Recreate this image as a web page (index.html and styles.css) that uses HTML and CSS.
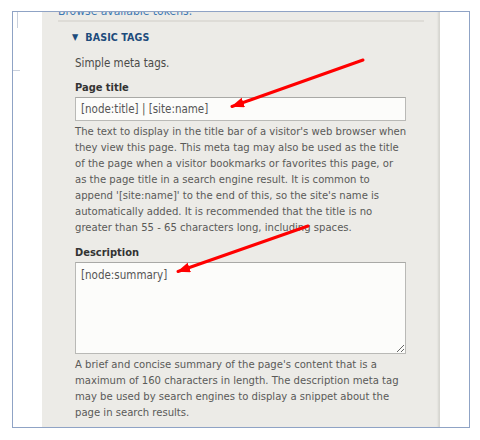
FILE: index.html
```html
<!DOCTYPE html>
<html>
<head>
<meta charset="utf-8">
<link rel="stylesheet" href="styles.css">
</head>
<body>
<div class="frame">
  <div class="mark-v"></div>
  <div class="mark-h"></div>
  <div class="panel">
    <a class="tokens" href="#">Browse available tokens.</a>
    <div class="fieldset">
      <div class="legend"><span class="tri">▼</span><span>BASIC TAGS</span></div>
      <div class="intro">Simple meta tags.</div>
      <div class="label">Page title</div>
      <input class="text" type="text" value="[node:title] | [site:name]" readonly>
      <div class="help">The text to display in the title bar of a visitor's web browser when<br>they view this page. This meta tag may also be used as the title<br>of the page when a visitor bookmarks or favorites this page, or<br>as the page title in a search engine result. It is common to<br>append '[site:name]' to the end of this, so the site's name is<br>automatically added. It is recommended that the title is no<br>greater than 55 - 65 characters long, including spaces.</div>
      <div class="label label-desc">Description</div>
      <textarea class="area" readonly>[node:summary]</textarea>
      <div class="help">A brief and concise summary of the page's content that is a<br>maximum of 160 characters in length. The description meta tag<br>may be used by search engines to display a snippet about the<br>page in search results.</div>
    </div>
  </div>
</div>
<svg class="arrows" width="480" height="440" viewBox="0 0 480 440">
  <defs>
    <marker id="head" markerUnits="userSpaceOnUse" markerWidth="14" markerHeight="12" refX="12" refY="5" orient="auto">
      <path d="M0,0 L13,5 L0,10 Z" fill="#ff0000"/>
    </marker>
  </defs>
  <line x1="363" y1="60" x2="232" y2="106.5" stroke="#ff0000" stroke-width="3" stroke-linecap="round" marker-end="url(#head)"/>
  <line x1="308" y1="226" x2="178" y2="271.5" stroke="#ff0000" stroke-width="3" stroke-linecap="round" marker-end="url(#head)"/>
</svg>
</body>
</html>
```
FILE: styles.css
```css
html, body {
  margin: 0;
  padding: 0;
  background: #ffffff;
}
body {
  position: relative;
  width: 480px;
  height: 440px;
  overflow: hidden;
  font-family: "DejaVu Sans Condensed", "DejaVu Sans", sans-serif;
}
.frame {
  position: relative;
  margin: 11px 0 0 12px;
  width: 427px;
  height: 415px;
  border: 1px solid #8fa3c5;
  overflow: hidden;
  padding-left: 29px;
  box-sizing: content-box;
  display: flex;
}
.frame > .panel { flex: none; }
.mark-v {
  position: absolute;
  left: 4px;
  top: 0;
  width: 1px;
  height: 16px;
  background: #c9d0dc;
}
.mark-h {
  position: absolute;
  left: 0;
  top: 58px;
  width: 7px;
  height: 1px;
  background: #c9d0dc;
}
.panel {
  width: 398px;
  height: 100%;
  background: #ecebe7;
  box-shadow: inset -3px 0 2px -1px #d6d5d0;
  padding: 0 16px;
  box-sizing: border-box;
}
.tokens {
  display: block;
  margin-top: -10px;
  height: 18px;
  line-height: 18px;
  font-size: 12px;
  color: #3d78b3;
  text-decoration: none;
}
.fieldset {
  border-top: 2px solid #dedcd7;
  padding: 7px 17px 0 17px;
}
.legend {
  display: flex;
  align-items: center;
  gap: 7px;
  height: 16px;
  margin-left: -3px;
  color: #1d4c7c;
  font-weight: bold;
  font-size: 10.6px;
  letter-spacing: 0.1px;
}
.tri {
  font-size: 9px;
}
.intro {
  margin-top: 10px;
  font-size: 11.5px;
  line-height: 16px;
  color: #4a4a48;
}
.label {
  margin-top: 9px;
  font-size: 11px;
  line-height: 16px;
  font-weight: bold;
  color: #333;
}
.text {
  display: block;
  margin: 1px 0 0 0;
  width: 331px;
  height: 24px;
  box-sizing: border-box;
  border: 1px solid #b9b9b6;
  border-top-color: #a9a9a6;
  background: #fcfcfa;
  padding: 0 5px;
  font-family: inherit;
  font-size: 11.5px;
  color: #555;
  outline: none;
}
.help {
  margin-top: 3px;
  white-space: nowrap;
  font-size: 11.2px;
  line-height: 16px;
  color: #5a5a58;
}
.label-desc {
  margin-top: 9px;
}
.area {
  display: block;
  margin: 1px 0 0 0;
  width: 331px;
  height: 92px;
  box-sizing: border-box;
  border: 1px solid #b9b9b6;
  border-top-color: #a9a9a6;
  background: #fcfcfa;
  padding: 4px 5px;
  font-family: inherit;
  font-size: 11.5px;
  line-height: 16px;
  color: #555;
  outline: none;
  resize: vertical;
  overflow: hidden;
}
.arrows {
  position: absolute;
  left: 0;
  top: 0;
  pointer-events: none;
}
```
